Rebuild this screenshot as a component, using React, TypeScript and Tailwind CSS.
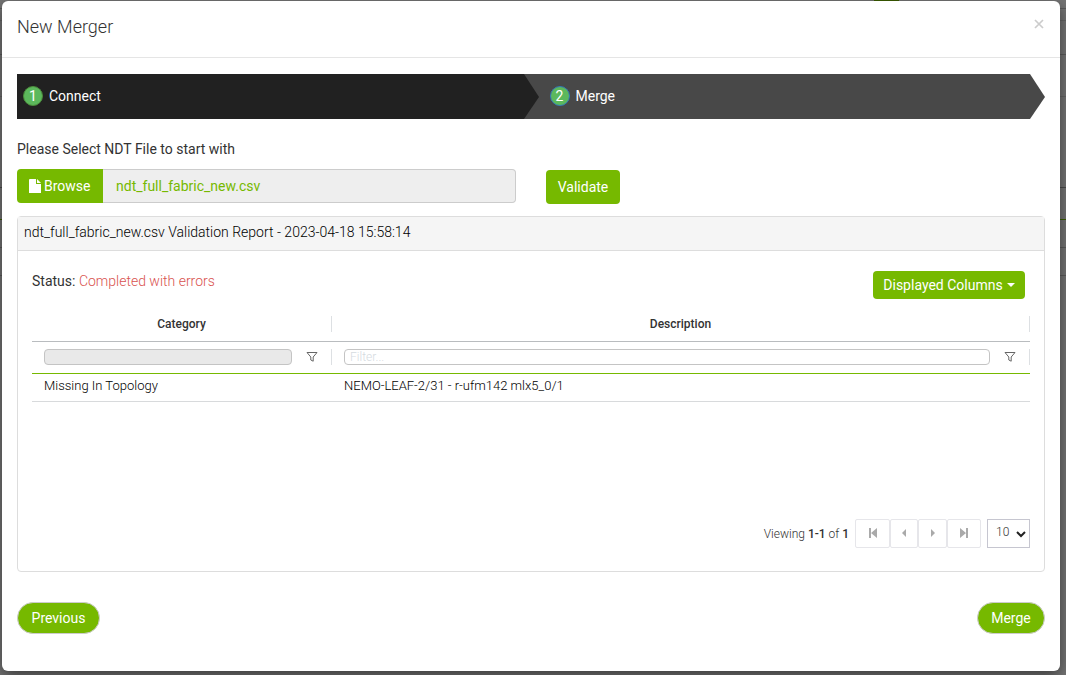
import { FC, ReactNode } from "react";

const GREEN_BUTTON =
  "bg-[#76b900] text-white text-sm leading-5 hover:bg-[#6aa600]";

interface StepProps {
  number: number;
  label: string;
  active?: boolean;
}

const Step: FC<StepProps> = ({ number, label, active }) => (
  <li
    className={`relative flex h-[45px] flex-1 pt-3 pl-[6px] ${
      active ? "bg-[#484848]" : "z-10 bg-[#212121]"
    }`}
    aria-current={active ? "step" : undefined}
  >
    <span
      className={`size-5 rounded-full border bg-[#5cb85c] text-center text-sm
        leading-[18px] ${
          active ? "ml-5 border-[#337ab7]" : "border-[#4b8b3b]"
        }`}
    >
      {number}
    </span>
    <span className="ml-[6px] text-sm leading-5">{label}</span>
    <svg
      className="absolute top-0 left-full h-full w-[15px]"
      viewBox="0 0 15 45"
      preserveAspectRatio="none"
      aria-hidden="true"
    >
      <path d="M0 0 15 23 0 45Z" fill={active ? "#484848" : "#212121"} />
    </svg>
  </li>
);

const FunnelIcon = () => (
  <svg
    className="size-3"
    viewBox="0 0 12 12"
    fill="none"
    stroke="#666"
    aria-hidden="true"
  >
    <path d="M1 1.5h10L7.2 6v4.2L4.8 9V6Z" />
  </svg>
);

interface FilterCellProps {
  label: string;
  disabled?: boolean;
}

const FilterCell: FC<FilterCellProps> = ({ label, disabled }) => (
  <td className="h-8 p-0">
    <div className="flex h-4 items-center border-r border-[#dde0e3] pr-[13px] pl-3">
      <input
        className="h-4 min-w-0 flex-1 rounded-sm border border-[#c4c4c4] bg-white
          px-[5px] text-xs leading-3 font-light placeholder:text-[#d5dbdf]
          disabled:bg-[#e9e9e9]"
        aria-label={label}
        placeholder={disabled ? "" : "Filter..."}
        disabled={disabled}
      />
      <button type="button" className="ml-[14px]" aria-label={`${label} options`}>
        <FunnelIcon />
      </button>
    </div>
  </td>
);

interface PagerButtonProps {
  label: string;
  className: string;
  children: ReactNode;
}

const PagerButton: FC<PagerButtonProps> = ({ label, className, children }) => (
  <button
    type="button"
    className={`flex h-[29px] items-center justify-center rounded-xs border
      border-[#e6e6ea] pb-px text-[#aaa] ${className}`}
    aria-label={label}
  >
    <svg
      className="h-3 w-[10px]"
      viewBox="0 0 10 12"
      fill="currentColor"
      aria-hidden="true"
    >
      {children}
    </svg>
  </button>
);

const ValidationTable = () => (
  <table className="mt-3 w-full table-fixed border-collapse text-xs leading-4">
    <colgroup>
      <col className="w-[300px]" />
      <col />
    </colgroup>
    <thead>
      <tr className="h-[30px] border-b border-[#b9bcbf]">
        {["Category", "Description"].map((name) => (
          <th key={name} className="p-0 pb-1 font-medium">
            <div className="border-r border-[#dde0e3]">{name}</div>
          </th>
        ))}
      </tr>
    </thead>
    <tbody>
      <tr className="border-b border-[#76b900]">
        <FilterCell label="Filter category" disabled />
        <FilterCell label="Filter description" />
      </tr>
      <tr className="h-7 border-b border-[#d8dadc] text-[13px] font-light text-black">
        <td className="p-0 pb-[2px] pl-3">Missing In Topology</td>
        <td className="p-0 pb-[2px] pl-3">NEMO-LEAF-2/31 - r-ufm142 mlx5_0/1</td>
      </tr>
    </tbody>
  </table>
);

const Pager = () => (
  <div className="flex items-center justify-end text-xs leading-4">
    <p className="mr-[6px] font-light">
      Viewing <b className="font-medium">1-1</b> of{" "}
      <b className="font-medium">1</b>
    </p>
    <PagerButton label="First page" className="w-[35px]">
      <path d="M1 1h2v10H1ZM9 1v10L3 6Z" />
    </PagerButton>
    <PagerButton label="Previous page" className="w-7">
      <path d="M7 2v8L3 6Z" />
    </PagerButton>
    <PagerButton label="Next page" className="w-[29px]">
      <path d="M3 2v8L7 6Z" />
    </PagerButton>
    <PagerButton label="Last page" className="w-[34px]">
      <path d="M7 1h2v10H7ZM1 1v10L7 6Z" />
    </PagerButton>
    <div className="relative ml-[6px]">
      <select
        className="h-[29px] w-[43px] appearance-none border border-[#c6c6d0]
          bg-white pb-[3px] pl-2 font-light"
        aria-label="Rows per page"
      >
        <option>10</option>
      </select>
      <svg
        className="pointer-events-none absolute top-3 right-1 h-[7px] w-[10px]"
        viewBox="0 0 10 7"
        fill="none"
        stroke="#222"
        strokeWidth="2"
        aria-hidden="true"
      >
        <path d="m1 1 4 4 4-4" />
      </svg>
    </div>
  </div>
);

// Dimmed page that shows around the edges of the modal
const Backdrop = () => (
  <div className="absolute inset-0 -z-10 bg-[#757575]" aria-hidden="true">
    <div className="h-[9px] border-b border-[#5c5c5c]">
      <div className="ml-[82%] h-2 w-[25px] bg-[#3b5d00]" />
    </div>
    <div className="h-3 border-b border-[#666]" />
    <div className="h-[34px] border-b border-[#5c5c5c]" />
    <div className="h-[42px] border-b border-[#666]" />
    <div className="h-[91px] border-b border-[#4c4c4c]" />
    <div className="h-8 border-b border-[#3b5d00]" />
    <div className="h-7 border-b border-[#5c5c5c]" />
    <div className="h-7 border-b border-[#5c5c5c]" />
  </div>
);

export default function App() {
  return (
    <div
      className="relative isolate min-h-screen pt-px pr-[6px] pb-1 pl-[2px]
        font-[Roboto,sans-serif] text-[#333]"
    >
      <Backdrop />
      <div
        className="flex min-h-[670px] flex-col rounded-md bg-white
          shadow-[0_5px_15px_rgba(0,0,0,0.5)]"
        role="dialog"
        aria-labelledby="merger-title"
      >
        {/* Header */}
        <div className="flex h-[57px] justify-between border-b border-[#e5e5e5] pt-3 pr-[15px] pl-[15px]">
          <h1 id="merger-title" className="text-lg leading-7 font-light">
            New Merger
          </h1>
          <button
            type="button"
            className="mt-[5px] flex size-3 items-center justify-center text-[#ccc]"
            aria-label="Close"
          >
            <svg
              className="size-[10px]"
              viewBox="0 0 10 10"
              stroke="currentColor"
              strokeWidth="1.7"
              aria-hidden="true"
            >
              <path d="m1 1 8 8M9 1 1 9" />
            </svg>
          </button>
        </div>

        {/* Body */}
        <div className="px-[15px] pt-4">
          <ol className="mr-[15px] flex text-white">
            <Step number={1} label="Connect" />
            <Step number={2} label="Merge" active />
          </ol>

          <label htmlFor="ndt-file" className="mt-5 block text-sm leading-5">
            Please Select NDT File to start with
          </label>
          <div className="mt-[10px] flex items-start">
            <button
              type="button"
              className={`flex h-[34px] w-[86px] items-center rounded-l-sm pl-3 ${GREEN_BUTTON}`}
            >
              <svg
                className="mr-[3px] h-[14px] w-3"
                viewBox="0 0 12 14"
                fill="currentColor"
                aria-hidden="true"
              >
                <path d="M1 0h6v5h5v9H0V1Q0 0 1 0ZM8 0l4 4H8Z" />
              </svg>
              Browse
            </button>
            <input
              id="ndt-file"
              className="h-[34px] w-[413px] rounded-r-sm border border-l-0
                border-[#ccc] bg-[#eee] px-[13px] text-sm text-[#76b900]"
              value="ndt_full_fabric_new.csv"
              readOnly
            />
            <button
              type="button"
              className={`mt-px ml-[30px] h-[34px] w-[74px] rounded-sm ${GREEN_BUTTON}`}
            >
              Validate
            </button>
          </div>

          {/* Validation report */}
          <section className="mt-3 rounded-sm border border-[#ddd]">
            <h2 className="h-[34px] border-b border-[#ddd] bg-[#f5f5f5] px-[6px] pt-[5px] text-sm leading-5 font-light text-black">
              ndt_full_fabric_new.csv Validation Report - 2023-04-18 15:58:14
            </h2>
            <div className="flex min-h-[320px] flex-col px-[14px] pt-5 pb-[23px]">
              <div className="flex justify-between pr-[5px]">
                <p className="text-sm leading-5">
                  Status:{" "}
                  <span className="font-light text-[#d9534f]">
                    Completed with errors
                  </span>
                </p>
                <button
                  type="button"
                  className={`flex h-7 w-[152px] items-center justify-center gap-1 rounded-sm ${GREEN_BUTTON}`}
                >
                  Displayed Columns
                  <svg
                    className="h-1 w-2"
                    viewBox="0 0 8 4"
                    fill="currentColor"
                    aria-hidden="true"
                  >
                    <path d="M0 0h8L4 4Z" />
                  </svg>
                </button>
              </div>
              <ValidationTable />
              <div className="mt-auto">
                <Pager />
              </div>
            </div>
          </section>
        </div>

        {/* Footer */}
        <div className="flex justify-between px-[15px] pt-[30px]">
          <button
            type="button"
            className={`h-8 w-[83px] rounded-full border border-[#ccc] ${GREEN_BUTTON}`}
          >
            Previous
          </button>
          <button
            type="button"
            className={`h-8 w-[68px] rounded-full border border-[#ccc] ${GREEN_BUTTON}`}
          >
            Merge
          </button>
        </div>
      </div>
    </div>
  );
}
